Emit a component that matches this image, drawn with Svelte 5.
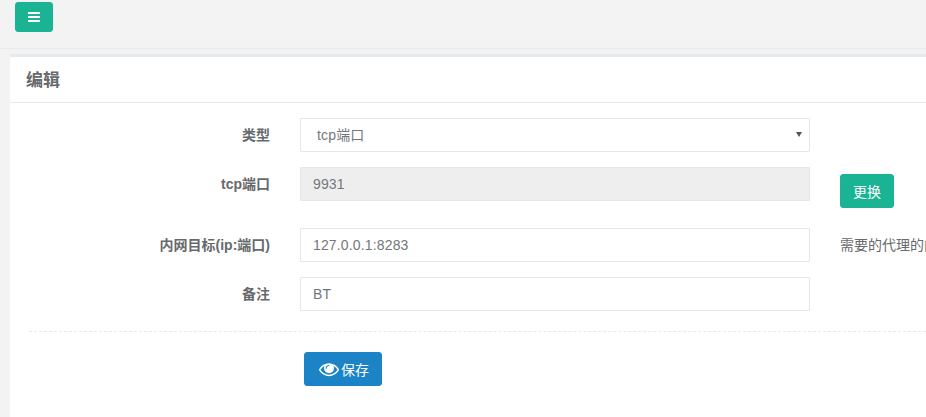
<script>
  let target = '127.0.0.1:8283';
  let remark = 'BT';
</script>

<div class="page">
  <div class="topbar">
    <button class="menu-btn" aria-label="menu">
      <span></span><span></span><span></span>
    </button>
  </div>

  <div class="ibox">
    <div class="ibox-title"><h5>编辑</h5></div>
    <div class="ibox-content">
      <form class="form">
        <label class="label" for="type">类型</label>
        <div class="select-wrap">
          <select id="type" class="control select">
            <option>tcp端口</option>
          </select>
          <i class="caret"></i>
        </div>
        <div></div>

        <label class="label" for="port">tcp端口</label>
        <input id="port" class="control tall-control" value="9931" disabled />
        <div class="extra"><button type="button" class="change-btn">更换</button></div>

        <label class="label" for="target">内网目标(ip:端口)</label>
        <input id="target" class="control" bind:value={target} />
        <span class="help">需要的代理的内网ip和端口</span>

        <label class="label" for="remark">备注</label>
        <input id="remark" class="control" bind:value={remark} />
        <div></div>
      </form>

      <div class="divider"></div>

      <button type="button" class="save-btn">
        <svg viewBox="0 0 1792 1792" width="20" height="20" aria-hidden="true">
          <path fill="currentColor" d="M1664 960q-152-236-381-353 61 104 61 225 0 185-131.500 316.500t-316.500 131.500-316.500-131.500-131.500-316.500q0-121 61-225-229 117-381 353 133 205 333.500 326.500t434.500 121.500 434.500-121.500 333.500-326.500zm-720-384q0-20-14-34t-34-14q-125 0-214.500 89.500t-89.500 214.500q0 20 14 34t34 14 34-14 14-34q0-86 61-147t147-61q20 0 34-14t14-34zm848 384q0 34-20 69-140 230-376.500 368.500t-499.500 138.500-499.500-139-376.500-368q-20-35-20-69t20-69q140-229 376.500-368t499.500-139 499.500 139 376.500 368q20 35 20 69z"/>
        </svg>
        保存
      </button>
    </div>
  </div>
</div>

<style>
  :global(body) {
    margin: 0;
    background: #f3f3f4;
    overflow: hidden;
  }

  .page {
    height: 417px;
    width: 926px;
    overflow: hidden;
    color: #676a6c;
    font-family: "Liberation Sans", "Noto Sans CJK SC", sans-serif;
    font-size: 14px;
    background: #f3f3f4;
  }

  .topbar {
    height: 49px;
    padding: 2px 0 0 15px;
    box-sizing: border-box;
    border-bottom: 1px solid #e7eaec;
    margin-bottom: 5px;
  }

  .menu-btn {
    width: 38px;
    height: 30px;
    padding: 0;
    background: #1ab394;
    border: 1px solid #1ab394;
    border-radius: 3px;
    display: flex;
    flex-direction: column;
    align-items: center;
    justify-content: center;
    gap: 2px;
  }

  .menu-btn span {
    width: 12px;
    height: 2px;
    background: #fff;
  }

  .ibox {
    margin-left: 10px;
    height: 363px;
    background: #fff;
    border-top: 3px solid #e7eaec;
  }

  .ibox-title {
    height: 46px;
    box-sizing: border-box;
    padding: 0 15px 2px 16px;
    border-bottom: 1px solid #e7eaec;
    display: flex;
    align-items: center;
  }

  .ibox-title h5 {
    margin: 0;
    font-size: 17px;
    font-weight: 700;
    color: #676a6c;
  }

  .ibox-content {
    padding: 15px 0 0 19px;
  }

  .form {
    display: grid;
    grid-template-columns: 241px 510px auto;
    column-gap: 30px;
    row-gap: 15px;
    white-space: nowrap;
    align-items: start;
  }

  .label {
    justify-self: end;
    font-weight: 700;
    line-height: 34px;
  }

  .control {
    width: 510px;
    height: 34px;
    box-sizing: border-box;
    padding: 0 12px;
    margin: 0;
    border: 1px solid #e5e6e7;
    border-radius: 1px;
    background: #fff;
    color: #74777a;
    font: inherit;
    letter-spacing: 0.15px;
    outline: none;
  }

  .control:disabled {
    background: #eee;
    color: #74777a;
    opacity: 1;
  }

  .tall-control {
    margin-bottom: 12px;
  }

  .select-wrap {
    position: relative;
    width: 510px;
    height: 34px;
  }

  .select {
    appearance: none;
    padding-left: 16px;
  }

  .caret {
    position: absolute;
    top: 14px;
    right: 8px;
    border-left: 3px solid transparent;
    border-right: 3px solid transparent;
    border-top: 5px solid #555;
  }

  .extra {
    padding-top: 7px;
  }

  .change-btn {
    width: 54px;
    height: 34px;
    padding: 0;
    background: #1ab394;
    border: 1px solid #1ab394;
    border-radius: 3px;
    color: #fff;
    font: inherit;
  }

  .help {
    line-height: 34px;
  }

  .divider {
    margin-top: 20px;
    border-top: 1px dashed #e7eaec;
  }

  .save-btn {
    margin: 20px 0 0 275px;
    width: 78px;
    height: 34px;
    padding: 0 0 0 14px;
    background: #1c84c6;
    border: 1px solid #1c84c6;
    border-radius: 3px;
    color: #fff;
    font: inherit;
    display: flex;
    align-items: center;
    gap: 2px;
  }
</style>
